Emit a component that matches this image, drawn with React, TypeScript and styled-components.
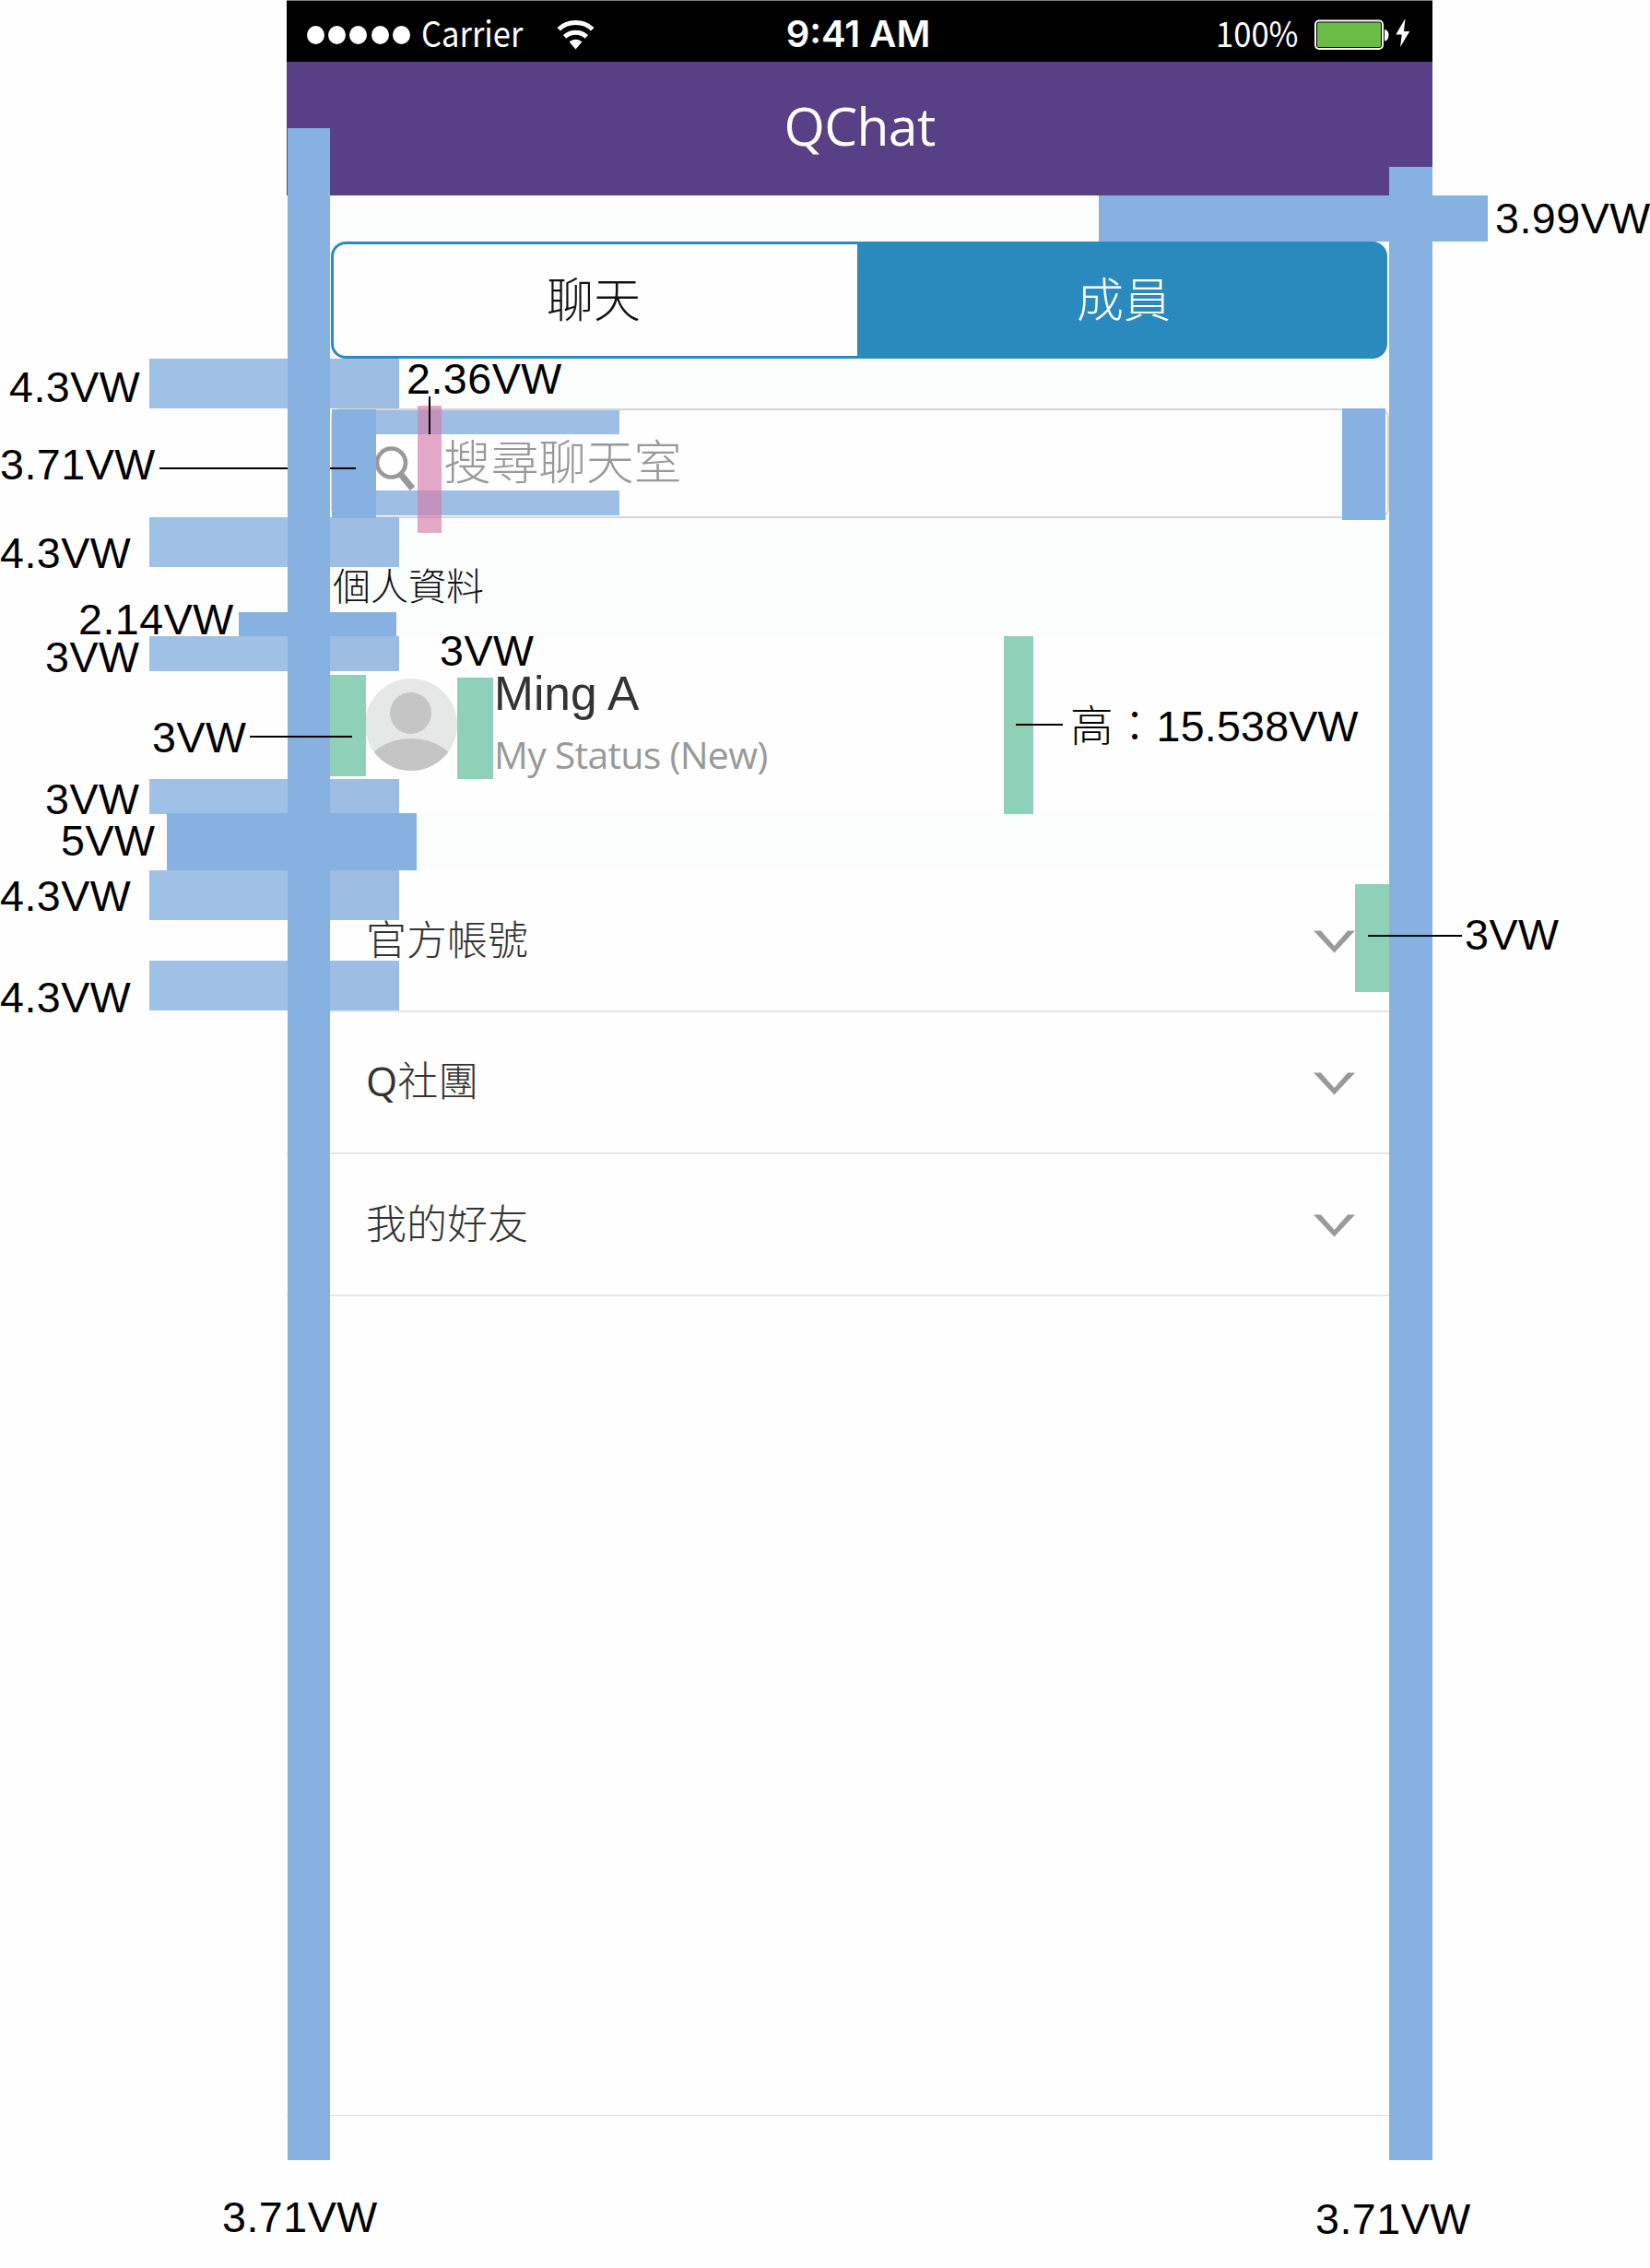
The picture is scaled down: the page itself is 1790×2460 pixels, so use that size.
import React from "react";
import styled, { createGlobalStyle } from "styled-components";

const latin = `"Open Sans", "Noto Sans", "Noto Sans CJK TC", sans-serif`;
const cjk = `"Noto Sans CJK TC", "Open Sans", sans-serif`;
const arial = `"Liberation Sans", Arial, "Noto Sans CJK TC", sans-serif`;

const GlobalStyle = createGlobalStyle`
  * { box-sizing: border-box; }
  body { margin: 0; background: #fefefe; }
`;

const Board = styled.main`
  position: relative;
  width: 1790px;
  height: 2460px;
  overflow: hidden;
  background: #fefefe;
  padding-left: 311px;
`;

/* ---------- phone ---------- */

const Phone = styled.section`
  display: flex;
  flex-direction: column;
  width: 1243px;
  height: 2342px;
  background: #fefefe;
`;

const StatusBar = styled.header`
  display: grid;
  grid-template-columns: 1fr auto 1fr;
  align-items: center;
  height: 67px;
  padding: 7px 20px 0 22px;
  border-top: 1px solid #7f7f7f;
  background: #000;
  color: #fff;
`;

const StatusGroup = styled.div<{ $end?: boolean }>`
  display: flex;
  align-items: center;
  justify-content: ${(p) => (p.$end ? "flex-end" : "flex-start")};
`;

const Dots = styled.div`
  display: flex;
  gap: 4.2px;
  margin-right: 12px;
`;

const Dot = styled.i`
  width: 19px;
  height: 20px;
  border-radius: 50%;
  background: #fff;
`;

const StatusText = styled.span<{ $w: number }>`
  display: block;
  width: ${(p) => p.$w}px;
  padding-bottom: 6px;
  font: 400 38px/40px ${cjk};
  white-space: nowrap;
  transform: scaleX(0.91);
  transform-origin: left center;
`;

const Clock = styled.span`
  padding: 0 5px 2px 0;
  font: 600 40px/40px Inter, sans-serif;
  white-space: nowrap;
`;

const TitleBar = styled.div`
  display: flex;
  justify-content: center;
  height: 145px;
  padding-top: 34px;
  background: #584087;
  color: #fff;
  font: 400 57px/70px ${latin};
  letter-spacing: -0.6px;
`;

const Tinted = styled.div`
  display: flex;
  flex-direction: column;
  height: 480px;
  padding: 50px 47px 0 48px;
  background: #fbfdfc;
`;

const Tabs = styled.nav`
  display: grid;
  grid-template-columns: 568px 1fr;
  height: 127px;
  margin-right: 2px;
  border: 3px solid #2a8abd;
  border-radius: 16px;
  overflow: hidden;
  background: #2a8abd;
`;

const Tab = styled.button<{ $active?: boolean }>`
  border: 0;
  padding: ${(p) => (p.$active ? "0 0 7px 6px" : "0 4px 7px 0")};
  background: ${(p) => (p.$active ? "#2a8abd" : "#fefefe")};
  color: ${(p) => (p.$active ? "#fff" : "#111")};
  font: 300 51px/60px ${cjk};
`;

const Search = styled.div`
  display: flex;
  align-items: flex-start;
  height: 119px;
  margin-top: 54px;
  padding: 23px 0 0 46px;
  border: 2px solid #d6d6d6;
  border-radius: 10px;
  background: #fefefe;
  color: #999;
  font: 300 51.7px/60px ${cjk};
`;

const SearchGlyph = styled.svg`
  width: 46px;
  height: 50px;
  margin: 14px 28px 0 0;
`;

const SectionTitle = styled.h2`
  margin: 41px 0 0 2px;
  color: #111;
  font: 300 41px/60px ${cjk};
`;

const Profile = styled.div`
  display: flex;
  height: 191px;
  padding: 44px 0 0 85px;
`;

const Avatar = styled.svg`
  width: 100px;
  height: 100px;
`;

const Who = styled.div`
  display: flex;
  flex-direction: column;
  margin-left: 40px;
`;

const Name = styled.strong`
  color: #333;
  font: 400 51.5px/60px ${arial};
  margin-top: -14px;
`;

const Mood = styled.span`
  color: #999;
  font: 400 41px/50px ${latin};
  letter-spacing: -0.75px;
  margin-top: 11px;
`;

const Spacer = styled.div`
  height: 61px;
  background: #fbfdfc;
`;

const Row = styled.div`
  display: flex;
  align-items: center;
  justify-content: space-between;
  height: 154px;
  padding: 2px 84px 0 86px;
  border-bottom: 2px solid #e6e6e6;
  color: #333;
  font: 300 44px/60px ${cjk};
`;

const RowLabel = styled.span`
  padding-bottom: 8px;
`;

const Initial = styled.span`
  font-family: ${latin};
  font-weight: 400;
`;

const Chevron = styled.svg`
  width: 45px;
  height: 25px;
`;

const BottomLine = styled.div`
  margin-top: auto;
  height: 48px;
  border-top: 1px solid #dedede;
`;

/* ---------- measurement overlay ---------- */

const tones = {
  dark: "#87b1e0",
  light: "linear-gradient(90deg, #a0c1e6 196px, #9dbde3 196px)",
  inner: "#9dbee5",
  green: "#8ed0b8",
  pink: "rgba(213, 125, 173, 0.67)",
  ink: "#000",
};

type Box = { $x: number; $y: number; $w: number; $h: number; $tone: keyof typeof tones };

const Bar = styled.div<Box>`
  position: absolute;
  left: ${(p) => p.$x}px;
  top: ${(p) => p.$y}px;
  width: ${(p) => p.$w}px;
  height: ${(p) => p.$h}px;
  background: ${(p) => tones[p.$tone]};
`;

const Label = styled.span<{ $x: number; $base: number }>`
  position: absolute;
  left: ${(p) => p.$x}px;
  top: ${(p) => p.$base - 39}px;
  color: #000;
  font: 400 46.6px/46px ${arial};
  letter-spacing: 0.5px;
  white-space: nowrap;
`;

const Height = styled(Label)`
  font-weight: 300;
  letter-spacing: 0.2px;
`;

type BarTuple = [number, number, number, number, keyof typeof tones];

const bars: BarTuple[] = [
  [1192, 212, 422, 50, "dark"],
  [162, 389, 271, 54, "light"],
  [162, 561, 271, 54, "light"],
  [259, 664, 171, 26, "dark"],
  [162, 690, 271, 38, "light"],
  [162, 845, 271, 38, "light"],
  [181, 882, 271, 62, "dark"],
  [162, 944, 271, 54, "light"],
  [162, 1042, 271, 54, "light"],
  [407, 445, 265, 26, "inner"],
  [407, 532, 265, 27, "inner"],
  [360, 444, 48, 118, "dark"],
  [1456, 443, 47, 121, "dark"],
  [358, 732, 39, 110, "green"],
  [496, 735, 39, 110, "green"],
  [1089, 690, 32, 193, "green"],
  [1470, 959, 38, 117, "green"],
  [453, 440, 26, 138, "pink"],
  [173, 507, 213, 2, "ink"],
  [312, 139, 46, 2204, "dark"],
  [1507, 181, 47, 2162, "dark"],
  [465, 430, 2, 41, "ink"],
  [271, 798, 111, 2, "ink"],
  [1102, 785, 51, 2, "ink"],
  [1484, 1014, 102, 2, "ink"],
];

const labels: [string, number, number][] = [
  ["3.99VW", 1622, 253],
  ["4.3VW", 10, 436],
  ["2.36VW", 441, 427],
  ["3.71VW", 0, 520],
  ["4.3VW", 0, 616],
  ["2.14VW", 85, 688],
  ["3VW", 49, 729],
  ["3VW", 477, 722],
  ["3VW", 165, 816],
  ["3VW", 49, 883],
  ["5VW", 66, 928],
  ["4.3VW", 0, 988],
  ["4.3VW", 0, 1098],
  ["3VW", 1589, 1030],
  ["3.71VW", 241, 2421],
  ["3.71VW", 1427, 2423],
];

const WifiIcon = () => (
  <svg width="41" height="32" viewBox="0 0 41 32" fill="none" stroke="#fff" strokeWidth="5">
    <path d="M2.2 9.8C12 .2 29 .2 38.800 9.800" />
    <path d="M8.600 17.800c6.600-6 17.200-6 23.800 0" />
    <path d="M20.500 31.500 13.700 23.600c3.800-3.700 9.800-3.700 13.600 0Z" fill="#fff" stroke="none" />
  </svg>
);

const BatteryIcon = () => (
  <svg width="108" height="36" viewBox="0 0 108 36">
    <rect x="1" y="2.500" width="73" height="30.500" rx="4" fill="none" stroke="#fff" strokeWidth="2" />
    <rect x="3" y="4.500" width="69" height="26.500" rx="1.500" fill="#69bd45" />
    <path d="M76 12c6 0 6 12.500 0 12.500Z" fill="#fff" />
    <path d="M98.500 0 88.300 17.500h6.400l-1.600 13.500L103.300 14h-6.300Z" fill="#fff" />
  </svg>
);

const ChevronIcon = () => (
  <Chevron viewBox="0 0 45 25" fill="#999">
    <path d="M0 .5h8L22.500 17 37 .5h8L22.500 24.500Z" />
  </Chevron>
);

const sections = [
  { initial: "", name: "官方帳號" },
  { initial: "Q", name: "社團" },
  { initial: "", name: "我的好友" },
];

export default function App() {
  return (
    <Board>
      <GlobalStyle />
      <Phone>
        <StatusBar>
          <StatusGroup>
            <Dots>
              {[0, 1, 2, 3, 4].map((i) => (
                <Dot key={i} />
              ))}
            </Dots>
            <StatusText $w={147}>Carrier</StatusText>
            <WifiIcon />
          </StatusGroup>
          <Clock>9:41 AM</Clock>
          <StatusGroup $end>
            <StatusText $w={107}>100%</StatusText>
            <BatteryIcon />
          </StatusGroup>
        </StatusBar>
        <TitleBar>QChat</TitleBar>
        <Tinted>
          <Tabs>
            <Tab>聊天</Tab>
            <Tab $active>成員</Tab>
          </Tabs>
          <Search>
            <SearchGlyph viewBox="0 0 46 50" fill="none" stroke="#999">
              <circle cx="17.500" cy="20" r="15.500" strokeWidth="4.600" />
              <path d="M27 31.500 40.500 48" strokeWidth="7" />
            </SearchGlyph>
            搜尋聊天室
          </Search>
          <SectionTitle>個人資料</SectionTitle>
        </Tinted>
        <Profile>
          <Avatar viewBox="0 0 100 100">
            <clipPath id="face">
              <circle cx="50" cy="50" r="50" />
            </clipPath>
            <g clipPath="url(#face)">
              <rect width="100" height="100" fill="#e5e8e6" />
              <circle cx="49.500" cy="37.500" r="22.500" fill="#c5c5c5" />
              <ellipse cx="50" cy="101" rx="50" ry="36" fill="#c5c5c5" />
            </g>
          </Avatar>
          <Who>
            <Name>Ming A</Name>
            <Mood>My Status (New)</Mood>
          </Who>
        </Profile>
        <Spacer />
        {sections.map(({ initial, name }) => (
          <Row key={name}>
            <RowLabel>
              {initial && <Initial>{initial}</Initial>}
              {name}
            </RowLabel>
            <ChevronIcon />
          </Row>
        ))}
        <BottomLine />
      </Phone>

      {bars.map(([x, y, w, h, tone], i) => (
        <Bar key={i} $x={x} $y={y} $w={w} $h={h} $tone={tone} />
      ))}
      {labels.map(([text, x, base], i) => (
        <Label key={i} $x={x} $base={base}>
          {text}
        </Label>
      ))}
      <Height $x={1161} $base={804}>高：15.538VW</Height>
    </Board>
  );
}
